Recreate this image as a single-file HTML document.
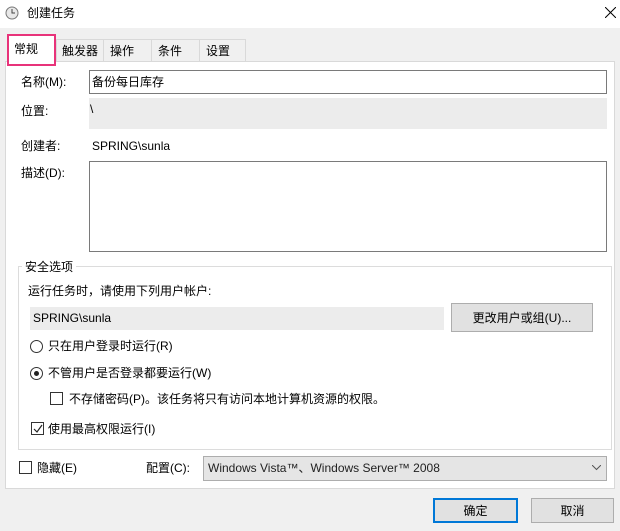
<!DOCTYPE html>
<html><head><meta charset="utf-8"><style>
*{box-sizing:border-box;margin:0;padding:0}
body{width:620px;height:531px;background:#f0f0f0;position:relative;overflow:hidden;font-family:"Liberation Sans","Noto Sans CJK SC",sans-serif;font-size:12px;color:#000}
.a{position:absolute;white-space:nowrap;line-height:16px}
.b{position:absolute}
.cb{position:absolute;width:13px;height:13px;border:1px solid #333;background:#fff}
.rd{position:absolute;width:13px;height:13px;border:1px solid #333;border-radius:50%;background:#fff}
</style></head><body>
<div class="b" style="left:0;top:0;width:620px;height:28px;background:#fff"></div>
<svg class="b" style="left:5px;top:6px" width="14" height="14" viewBox="0 0 14 14"><circle cx="7" cy="7" r="6" fill="#e8e8e8" stroke="#777"/><path d="M7 3v4h3" stroke="#444" fill="none"/></svg>
<div class="a" style="left:27px;top:5px">创建任务</div>
<svg class="b" style="left:605px;top:7px" width="11" height="11"><path d="M0 0L11 11M11 0L0 11" stroke="#000"/></svg>

<!-- tabs -->
<div class="b" style="left:56px;top:39px;width:190px;height:23px;border:1px solid #d9d9d9;background:#f0f0f0"></div>
<div class="b" style="left:103px;top:39px;width:1px;height:22px;background:#d9d9d9"></div>
<div class="b" style="left:151px;top:39px;width:1px;height:22px;background:#d9d9d9"></div>
<div class="b" style="left:199px;top:39px;width:1px;height:22px;background:#d9d9d9"></div>
<div class="a" style="left:62px;top:43px">触发器</div>
<div class="a" style="left:110px;top:43px">操作</div>
<div class="a" style="left:158px;top:43px">条件</div>
<div class="a" style="left:206px;top:43px">设置</div>

<div class="b" style="left:5px;top:61px;width:610px;height:428px;background:#fff;border:1px solid #d9d9d9"></div>
<div class="b" style="left:7px;top:34px;width:49px;height:32px;background:#fff;border:2px solid #e8337a"></div>
<div class="a" style="left:14px;top:41px">常规</div>

<div class="a" style="left:21px;top:74px">名称(M):</div>
<div class="b" style="left:89px;top:70px;width:518px;height:24px;border:1px solid #7a7a7a;background:#fff"></div>
<div class="a" style="left:92px;top:74px">备份每日库存</div>
<div class="a" style="left:21px;top:103px">位置:</div>
<div class="b" style="left:89px;top:98px;width:518px;height:31px;background:#ececec"></div>
<div class="a" style="left:90px;top:101px">\</div>
<div class="a" style="left:21px;top:138px">创建者:</div>
<div class="a" style="left:92px;top:138px">SPRING\sunla</div>
<div class="a" style="left:21px;top:165px">描述(D):</div>
<div class="b" style="left:89px;top:161px;width:518px;height:91px;border:1px solid #7a7a7a;background:#fff"></div>

<div class="b" style="left:18px;top:266px;width:594px;height:184px;border:1px solid #dcdcdc"></div>
<div class="a" style="left:22px;top:259px;background:#fff;padding:0 3px">安全选项</div>
<div class="a" style="left:28px;top:283px">运行任务时，请使用下列用户帐户:</div>
<div class="b" style="left:30px;top:307px;width:414px;height:23px;background:#ececec"></div>
<div class="a" style="left:33px;top:310px">SPRING\sunla</div>
<div class="b" style="left:451px;top:303px;width:142px;height:29px;border:1px solid #adadad;background:#e1e1e1"></div>
<div class="a" style="left:451px;top:310px;width:142px;text-align:center">更改用户或组(U)...</div>
<div class="rd" style="left:30px;top:340px"></div>
<div class="a" style="left:48px;top:338px">只在用户登录时运行(R)</div>
<div class="rd" style="left:30px;top:367px"></div>
<div class="b" style="left:34px;top:371px;width:5px;height:5px;border-radius:50%;background:#222"></div>
<div class="a" style="left:48px;top:365px">不管用户是否登录都要运行(W)</div>
<div class="cb" style="left:50px;top:392px"></div>
<div class="a" style="left:69px;top:391px">不存储密码(P)。该任务将只有访问本地计算机资源的权限。</div>
<div class="cb" style="left:31px;top:422px"></div>
<svg class="b" style="left:33px;top:424px" width="10" height="10"><path d="M1 5l3 3 5-7" stroke="#222" fill="none" stroke-width="1.2"/></svg>
<div class="a" style="left:48px;top:421px">使用最高权限运行(I)</div>

<div class="cb" style="left:19px;top:461px"></div>
<div class="a" style="left:37px;top:460px">隐藏(E)</div>
<div class="a" style="left:146px;top:460px">配置(C):</div>
<div class="b" style="left:203px;top:456px;width:404px;height:25px;border:1px solid #adadad;background:#e5e5e5"></div>
<div class="a" style="left:208px;top:460px;color:#222">Windows Vista™、Windows Server™ 2008</div>
<svg class="b" style="left:592px;top:465px" width="9" height="6"><path d="M0 0l4.5 4.5L9 0" stroke="#555" fill="none"/></svg>

<div class="b" style="left:433px;top:498px;width:85px;height:25px;border:2px solid #0078d7;background:#e1e1e1"></div>
<div class="a" style="left:433px;top:503px;width:85px;text-align:center">确定</div>
<div class="b" style="left:531px;top:498px;width:83px;height:25px;border:1px solid #adadad;background:#e1e1e1"></div>
<div class="a" style="left:531px;top:503px;width:83px;text-align:center">取消</div>
</body></html>
